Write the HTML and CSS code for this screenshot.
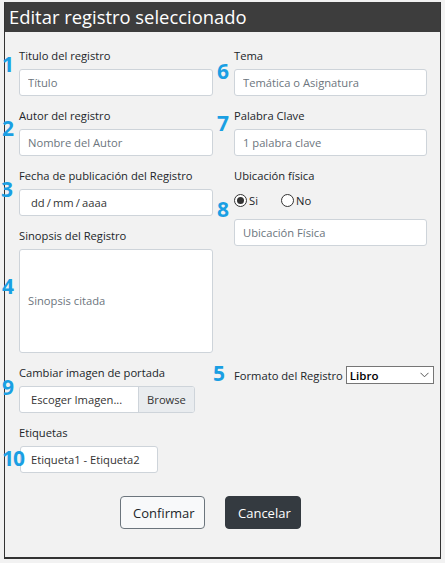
FILE: index.html
```html
<!DOCTYPE html>
<html lang="es">
<head>
<meta charset="utf-8">
<title>Editar registro</title>
<link rel="stylesheet" href="styles.css">
</head>
<body>
<div class="modal">
  <div class="modal-header"><h1 class="title">Editar registro seleccionado</h1></div>
  <div class="modal-body">
    <div class="form-grid">
      <div class="col">
        <div class="group"><span class="num n1">1</span><label class="lbl">Titulo del registro</label><input class="field" placeholder="Título"></div>
        <div class="group"><span class="num n2">2</span><label class="lbl">Autor del registro</label><input class="field" placeholder="Nombre del Autor"></div>
        <div class="group"><span class="num n3">3</span><label class="lbl">Fecha de publicación del Registro</label><input class="field date" value="dd / mm / aaaa"></div>
        <div class="group"><span class="num n4">4</span><label class="lbl">Sinopsis del Registro</label><textarea class="field area" placeholder="Sinopsis citada"></textarea></div>
      </div>
      <div class="col">
        <div class="group"><span class="num n6">6</span><label class="lbl">Tema</label><input class="field" placeholder="Temática o Asignatura"></div>
        <div class="group"><span class="num n7">7</span><label class="lbl">Palabra Clave</label><input class="field" placeholder="1 palabra clave"></div>
        <div class="group"><span class="num n8">8</span><label class="lbl">Ubicación física</label>
          <div class="radios">
            <span class="radio"><svg width="13" height="13" viewBox="0 0 13 13"><circle cx="6.5" cy="6.5" r="6" fill="#fff" stroke="#333" stroke-width="1"/><circle cx="6.5" cy="6.5" r="3.5" fill="#333"/></svg>Si</span>
            <span class="radio"><svg width="13" height="13" viewBox="0 0 13 13"><circle cx="6.5" cy="6.5" r="6" fill="#fff" stroke="#333" stroke-width="1"/></svg>No</span>
          </div>
          <input class="field" placeholder="Ubicación Física">
        </div>
      </div>
      <div class="group"><span class="num n9">9</span><label class="lbl">Cambiar imagen de portada</label>
        <div class="file"><span class="file-name">Escoger Imagen...</span><span class="file-btn">Browse</span></div>
      </div>
      <div class="group formato"><span class="num n5">5</span><span class="lbl-inline">Formato del Registro</span>
        <div class="select"><span>Libro</span><svg width="9" height="6" viewBox="0 0 9 6"><path d="M0.5 0.8 L4.5 4.8 L8.5 0.8" fill="none" stroke="#555" stroke-width="1"/></svg></div>
      </div>
      <div class="group"><span class="num n10">10</span><label class="lbl">Etiquetas</label><input class="field tags" value="Etiqueta1 - Etiqueta2"></div>
    </div>
    <div class="actions">
      <button class="btn btn-light">Confirmar</button>
      <button class="btn btn-dark">Cancelar</button>
    </div>
  </div>
</div>
</body>
</html>
```
FILE: styles.css
```css
* { box-sizing: border-box; }
html, body { margin: 0; padding: 0; background: #f2f2f2; }
body { font-family: "Open Sans", "Noto Sans", sans-serif; color: #212529; }

.modal {
  margin: 2px 0 0 4px;
  width: 437px;
  border-left: 1px solid #333;
  border-right: 1px solid #333;
  border-bottom: 2px solid #333;
  background: #f2f2f2;
}
.modal-header {
  height: 30px;
  background: #3d3d3d;
  padding-left: 4px;
}
.title {
  margin: 0;
  font-weight: 400;
  font-size: 18.4px;
  line-height: 30px;
  color: #fff;
}
.modal-body {
  padding: 16px 13px 28px 14px;
}
.form-grid {
  display: grid;
  grid-template-columns: 194px 193px;
  column-gap: 21px;
  align-items: start;
}
.group {
  position: relative;
  display: flex;
  flex-direction: column;
  align-items: flex-start;
  margin-bottom: 12px;
}
.lbl {
  display: block;
  font-size: 11.2px;
  line-height: 16px;
  margin-bottom: 5px;
  color: #212529;
}
.field {
  width: 100%;
  height: 27px;
  border: 1px solid #ced4da;
  border-radius: 3px;
  background: #fff;
  padding: 0 8px;
  font-family: "Open Sans", "Noto Sans", sans-serif;
  font-size: 11.2px;
  color: #333;
  outline: none;
}
.field::placeholder { color: #6c757d; }
.field.date { padding-left: 11px; color: #333; word-spacing: -0.8px; }
.area {
  height: 104px;
  resize: none;
  padding-top: 42px;
  line-height: 17px;
  display: block;
}
.field.tags { width: 138px; padding-left: 10px; margin-left: 1px; }

.radios {
  display: flex;
  align-items: center;
  height: 22px;
  margin-bottom: 8px;
  font-size: 11.2px;
}
.radio {
  display: flex;
  align-items: center;
  gap: 2px;
}
.radio svg { display: block; }
.radio + .radio { margin-left: 23px; }

.file {
  display: flex;
  width: 176px;
  height: 27px;
  border: 1px solid #ced4da;
  border-radius: 3px;
  background: #fff;
  font-size: 11.2px;
  overflow: hidden;
}
.file-name {
  flex: 1;
  display: flex;
  align-items: center;
  padding-left: 11px;
  color: #333;
}
.file-btn {
  width: 56px;
  display: flex;
  align-items: center;
  justify-content: center;
  background: #e9ecef;
  border-left: 1px solid #ced4da;
  color: #333;
}

.formato {
  flex-direction: row;
  align-items: center;
  gap: 3px;
  width: 200px;
}
.lbl-inline {
  font-size: 11.2px;
  line-height: 18px;
  margin-top: 2px;
  white-space: nowrap;
  flex-shrink: 0;
}
.select {
  flex-shrink: 0;
  width: 88px;
  height: 18px;
  border: 1px solid #767676;
  background: #fff;
  display: flex;
  align-items: center;
  justify-content: space-between;
  padding: 0 4px 0 3px;
  font-size: 11.5px;
  font-weight: 600;
  color: #000;
}
.select svg { display: block; }

.num {
  position: absolute;
  font-size: 21px;
  line-height: 21px;
  font-weight: 700;
  color: #1a9fe3;
}
.n1 { left: -17px; top: 6px; }
.n2 { left: -17px; top: 10px; }
.n3 { left: -18px; top: 11px; }
.n4 { left: -17px; top: 48px; }
.n9 { left: -17px; top: 12px; }
.n10 { left: -17px; top: 23px; letter-spacing: -1px; }
.n6 { left: -17px; top: 13px; }
.n7 { left: -17px; top: 5px; }
.n8 { left: -17px; top: 31px; }
.n5 { left: -21px; top: -2px; }

.actions {
  display: flex;
  gap: 20px;
  padding-left: 101px;
  margin-top: 11px;
}
.btn {
  height: 33px;
  border-radius: 4px;
  font-family: "Open Sans", "Noto Sans", sans-serif;
  font-size: 13px;
  padding: 0 12px;
}
.btn-light {
  width: 85px;
  background: #f8f9fa;
  border: 1px solid #6c757d;
  color: #212529;
}
.btn-dark {
  width: 76px;
  background: #343a40;
  border: 1px solid #343a40;
  color: #fff;
}
```
